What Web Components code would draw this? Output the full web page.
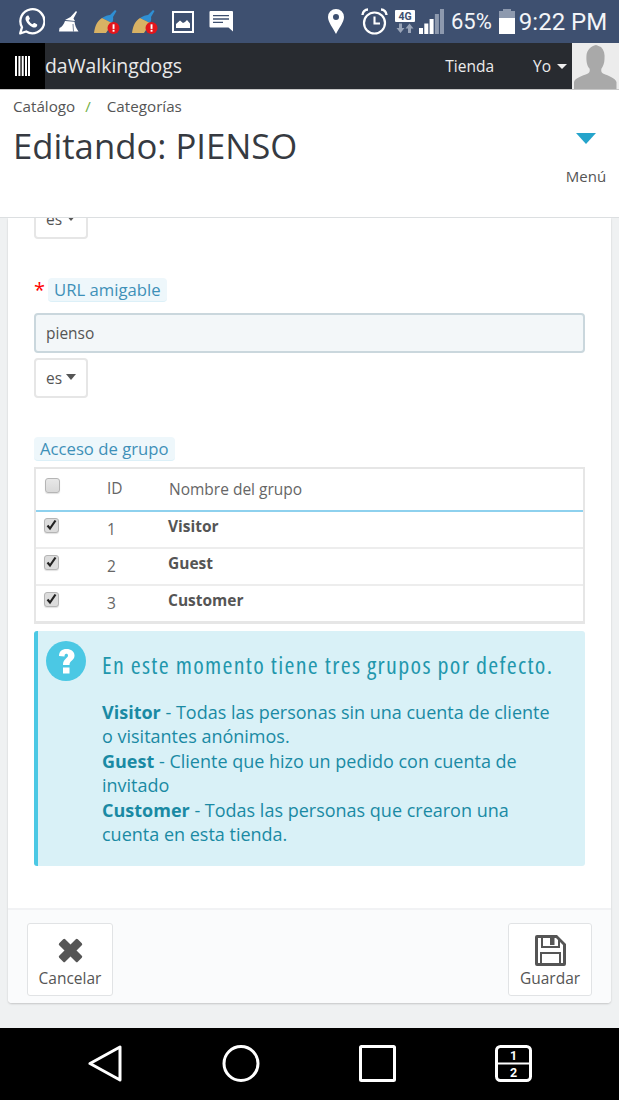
<!DOCTYPE html>
<html lang="es">
<head>
<meta charset="utf-8">
<title>Editando: PIENSO</title>
<style>
html, body { margin: 0; padding: 0; }
body { width: 619px; height: 1100px; overflow: hidden; display: flex; flex-direction: column; font-family: "Open Sans", "Liberation Sans", sans-serif; background: #eff1f2; }
</style>
</head>
<body>
<status-bar></status-bar>
<top-nav shop="daWalkingdogs"></top-nav>
<page-head title="Editando: PIENSO"></page-head>
<page-main>
  <lang-button clipped></lang-button>
  <form-label required style="margin-top:39px">URL amigable</form-label>
  <text-field value="pienso" style="margin-top:11px"></text-field>
  <lang-button style="margin-top:5px"></lang-button>
  <form-label style="margin-top:39px">Acceso de grupo</form-label>
  <group-table style="margin-top:6px"></group-table>
  <help-box style="margin-top:7px" heading="En este momento tiene tres grupos por defecto.">
    <b>Visitor</b> - Todas las personas sin una cuenta de cliente o visitantes anónimos.<br>
    <b>Guest</b> - Cliente que hizo un pedido con cuenta de invitado<br>
    <b>Customer</b> - Todas las personas que crearon una cuenta en esta tienda.
  </help-box>
  <form-footer slot="footer">
    <footer-button icon="close" style="width:86px">Cancelar</footer-button>
    <footer-button icon="save" style="width:84px">Guardar</footer-button>
  </form-footer>
</page-main>
<android-nav></android-nav>

<script>
class StatusBar extends HTMLElement {
    constructor() {
        super();
        const broom = `<svg width="26" height="24" viewBox="0 0 26 24">
          <path d="M8 8 C11 6 14 5 16 5 L21 0 L22.500 1 L19 7 C19.500 9 19 11 18 13 Z" fill="#2f8fd3"/>
          <path d="M8 8 L18 13 C17 16 14 20 12 23 L0 23 C1 16 3 11 8 8 Z" fill="#d8b264"/>
          <circle cx="19.500" cy="18" r="6" fill="#e3151b"/>
          <rect x="18.600" y="14.300" width="1.900" height="4.600" fill="#fff"/><rect x="18.600" y="19.800" width="1.900" height="1.900" fill="#fff"/>
        </svg>`;
        this.attachShadow({ mode: 'open' }).innerHTML = `
<style>
:host { display: flex; align-items: center; height: 43px; flex: none; background: #3e5070; color: #fff; font-family: Roboto, "Open Sans", sans-serif; }
svg { display: block; flex: none; }
.num { font-size: 22px; line-height: 1; color: #f3f5f8; }
.time { font-size: 24px; line-height: 1; color: #f3f5f8; white-space: nowrap; }
</style>
<svg style="margin-left:17px" width="28" height="28" viewBox="0 0 28 28" fill="none">
  <path d="M3.200 25.300 L5 19.200 A12 12 0 1 1 9.200 23.500 Z" stroke="#fff" stroke-width="2.300" stroke-linejoin="round"/>
  <path d="M10.200 7.800 C8.400 8.600 8 10.600 9 12.800 C10.200 15.600 12.600 18 15.600 19.200 C17.800 20 19.600 19.400 20.200 17.400 C20.400 16.800 20.300 16.500 19.900 16.300 L17.600 15.100 C17.200 14.900 16.900 15 16.600 15.300 L15.800 16.300 C14 15.600 12.400 14 11.700 12.200 L12.600 11.300 C12.900 11 12.900 10.700 12.800 10.300 L11.700 8 C11.400 7.500 10.800 7.500 10.200 7.800 Z" fill="#fff"/>
</svg>
<svg style="margin-left:14px" width="20" height="21" viewBox="0 0 20 21">
  <path d="M11.500 6 L17 0 L18 1 L14.500 7.500 L16 10 L6 9 Z" fill="#fff"/>
  <path d="M6 10 L15.500 10.800 C16 14 17 17.500 19.500 20.500 L0 20.500 L0.500 17 C3 16 5 13 6 10 Z" fill="#fff"/>
  <path d="M14 13 L14.500 20.500" stroke="#3e5070" stroke-width=".7"/>
</svg>
<span style="margin-left:15px;display:block">${broom}</span>
<span style="margin-left:12px;display:block">${broom}</span>
<svg style="margin-left:14px" width="22" height="22" viewBox="0 0 22 22">
  <rect x="1" y="1" width="20" height="20" fill="none" stroke="#fff" stroke-width="2"/>
  <path d="M4 17 L4 13 L8 9.500 L11 12 L13 11 L15 9 L18 12.500 L18 17 Z" fill="#fff"/>
</svg>
<svg style="margin-left:15px" width="24" height="21" viewBox="0 0 24 21">
  <path d="M0.500 1 Q0.500 0 1.500 0 L23 0 Q24 0 24 1 L24 20.500 L19.500 16.500 L1.500 16.500 Q0.500 16.500 0.500 15.500 Z" fill="#fff"/>
  <path d="M4 4.700 H20 M4 8 H20 M4 11.300 H14" stroke="#3e5070" stroke-width="1.300"/>
</svg>
<svg style="margin-left:95px" width="16" height="25" viewBox="0 0 16 25">
  <path fill-rule="evenodd" d="M8 0 A8 8 0 0 1 16 8 C16 13 11 19 8 25 C5 19 0 13 0 8 A8 8 0 0 1 8 0 Z M8 5 A3 3 0 1 0 8 11 A3 3 0 1 0 8 5 Z" fill="#fff"/>
</svg>
<svg style="margin-left:17px" width="27" height="27" viewBox="0 0 27 27" fill="none" stroke="#fff">
  <circle cx="13.500" cy="15" r="10.500" stroke-width="2.200"/>
  <path d="M13.500 8.500 V15.500 H19" stroke-width="2.100"/>
  <path d="M1.500 7 A5.500 5.500 0 0 1 7 1.500 M20 1.500 A5.500 5.500 0 0 1 25.500 7" stroke-width="2.400"/>
</svg>
<svg style="margin-left:7px" width="20" height="23" viewBox="0 0 20 23">
  <rect x="0" y="0" width="20" height="12" rx="1" fill="#fff"/>
  <text x="10" y="10" text-anchor="middle" font-family="Roboto, sans-serif" font-size="10.500" font-weight="700" fill="#3e5070">4G</text>
  <path d="M4 13.500 V18 H1.500 L5.500 23 L9.500 18 H7 V13.500 Z" fill="#9aa5b8"/>
  <path d="M13 23 V18.500 H10.500 L14.500 13.500 L18.500 18.500 H16 V23 Z" fill="#9aa5b8"/>
</svg>
<svg style="margin-left:4px" width="25" height="25" viewBox="0 0 25 25">
  <rect x="0" y="19" width="4" height="6" fill="#fff"/><rect x="5.300" y="14.500" width="4" height="10.500" fill="#fff"/>
  <rect x="10.600" y="10" width="4" height="15" fill="#fff"/><rect x="15.900" y="5" width="4" height="20" fill="#8d99ae"/>
  <rect x="21" y="0" width="4" height="25" fill="#8d99ae"/>
</svg>
<span class="num" style="margin-left:7px">65%</span>
<svg style="margin-left:7px" width="16" height="25" viewBox="0 0 16 25">
  <rect x="4" y="0" width="8" height="2.500" fill="#8d99ae"/><rect x="0" y="2" width="16" height="23" fill="#8d99ae"/>
  <rect x="0" y="9" width="16" height="16" fill="#fff"/>
</svg>
<span class="time" style="margin-left:4px">9:22 PM</span>`;
    }
}

class TopNav extends HTMLElement {
    constructor() {
        super();
        this.attachShadow({ mode: 'open' }).innerHTML = `
<style>
:host { display: flex; align-items: stretch; height: 46px; flex: none; background: #282b30; color: #e6e6e6; border-bottom: 1px solid #c8c8c8; font-family: "Open Sans", sans-serif; }
.logo { width: 45px; background: #000; display: flex; align-items: center; justify-content: center; }
.shop { font-size: 19.400px; line-height: 45px; flex: 1; color: #e9e9e9; }
.link { font-size: 15.500px; line-height: 46px; color: #ececec; }
.caret { width: 0; height: 0; border: 5px solid transparent; border-top-color: #eee; border-bottom: 0; align-self: center; margin-left: 6px; margin-right: 5px; }
.avatar { width: 47px; background: #ececec; }
svg { display: block; }
</style>
<div class="logo"><svg width="15" height="20" viewBox="0 0 15 20" fill="#fff"><rect x="0" y="0" width="2" height="20"/><rect x="3.400" y="0" width="2" height="20"/><rect x="6.700" y="0" width="2" height="20"/><rect x="10" y="0" width="2" height="20"/><rect x="13" y="0" width="2" height="20"/></svg></div>
<div class="shop">${this.getAttribute('shop')}</div>
<div class="link" style="margin-right:39px">Tienda</div>
<div class="link">Yo</div><div class="caret"></div>
<div class="avatar"><svg width="47" height="46" viewBox="0 0 47 46"><path d="M2 46 L2 39 C3 35 10 33 16 30.500 C18 29.500 18 27 17.500 25.500 C15 23 14 18 14.500 12 C15 7 19 3 24 2 C26 3 27 3 29 4 C32 7 33 11 32.500 16 C32.500 20 31 23.500 29.500 25.500 C29 27 29 29.500 31 30.500 C37 33 43 35 44.500 39 L44.500 46 Z" fill="#a9a9a9"/></svg></div>`;
    }
}

class PageHead extends HTMLElement {
    constructor() {
        super();
        this.attachShadow({ mode: 'open' }).innerHTML = `
<style>
:host { display: flex; justify-content: space-between; height: 128px; flex: none; box-sizing: border-box; background: #fff; border-bottom: 1px solid #dcdfe1; padding: 6px 14px 0 13px; font-family: "Open Sans", sans-serif; position: relative; z-index: 1; }
.crumbs { font-size: 15.200px; line-height: 20px; color: #555; display: flex; }
.sep { color: #6fae45; margin: 0 16px 0 10px; }
h1 { margin: 11px 0 0; font-size: 34.700px; line-height: 38px; font-weight: 400; color: #363a41; }
.menu { display: flex; flex-direction: column; align-items: center; font-size: 15px; color: #555; width: 38px; }
.arrow { width: 0; height: 0; border: 10.500px solid transparent; border-top: 11px solid #25a4cb; border-bottom: 0; margin-top: 37px; margin-left: -1px; }
.menu span { margin-top: 22px; line-height: 20px; white-space: nowrap; }
</style>
<div>
  <div class="crumbs"><span>Catálogo</span><span class="sep">/</span><span>Categorías</span></div>
  <h1>${this.getAttribute('title')}</h1>
</div>
<div class="menu"><div class="arrow"></div><span>Menú</span></div>`;
    }
}

class PageMain extends HTMLElement {
    constructor() {
        super();
        this.attachShadow({ mode: 'open' }).innerHTML = `
<style>
:host { display: block; flex: 1; min-height: 0; padding: 0 8px; overflow: hidden; color: #555; font-family: "Open Sans", sans-serif; }
.card { background: #fff; height: 785px; display: flex; flex-direction: column; box-shadow: 0 1px 2px rgba(0,0,0,.18); border-radius: 0 0 4px 4px; overflow: hidden; }
.body { flex: 1; padding: 0 26px 0 26px; display: flex; flex-direction: column; align-items: flex-start; }
</style>
<div class="card">
  <div class="body"><slot></slot></div>
  <slot name="footer"></slot>
</div>`;
    }
}

class LangButton extends HTMLElement {
    constructor() {
        super();
        this.attachShadow({ mode: 'open' }).innerHTML = `
<style>
:host { display: flex; align-items: center; justify-content: center; gap: 4px; box-sizing: border-box; width: 54px; height: 40px; background: #fff; border: 2px solid #e6e6e6; border-radius: 4px; font-size: 15.500px; color: #555; flex: none; }
:host([clipped]) { margin-top: -19px; }
i { width: 0; height: 0; border: 5.500px solid transparent; border-top: 6px solid #555; border-bottom: 0; margin-top: -3px; }
</style>
<span>es</span><i></i>`;
    }
}

class FormLabel extends HTMLElement {
    constructor() {
        super();
        this.attachShadow({ mode: 'open' }).innerHTML = `
<style>
:host { display: flex; align-items: flex-start; flex: none; }
.star { display: none; color: #f00; font-size: 20px; line-height: 24px; width: 14px; }
:host([required]) .star { display: block; }
.chip { display: block; height: 24px; box-sizing: border-box; padding: 0 6px; background: #eef7fb; border-bottom: 1px solid #dcf0f8; border-radius: 4px; color: #3e90b8; font-size: 16.700px; line-height: 24px; }
</style>
<span class="star">*</span><span class="chip"><slot></slot></span>`;
    }
}

class TextField extends HTMLElement {
    constructor() {
        super();
        this.attachShadow({ mode: 'open' }).innerHTML = `
<style>
:host { display: block; flex: none; align-self: stretch; box-sizing: border-box; height: 40px; padding: 0 10px; background: #f3f7f9; border: 2px solid #cad7dd; border-radius: 4px; font-size: 15.500px; line-height: 36px; color: #555; }
</style>${this.getAttribute('value')}`;
    }
}

class GroupTable extends HTMLElement {
    constructor() {
        super();
        const rows = [[1, 'Visitor'], [2, 'Guest'], [3, 'Customer']];
        this.attachShadow({ mode: 'open' }).innerHTML = `
<style>
:host { display: block; flex: none; align-self: stretch; border: 2px solid #e6e6e6; border-bottom-width: 3px; font-size: 15.500px; color: #666; }
.row { display: flex; height: 37px; box-sizing: border-box; border-bottom: 2px solid #ededed; position: relative; }
.row:last-child { border-bottom: 0; height: 35px; }
.row.head { height: 43px; border-bottom: 2px solid #8ed1ee; }
.check { width: 15px; height: 15px; box-sizing: border-box; margin: 6px 0 0 8px; background: #dcdcdc; border: 1px solid #b5b5b5; border-radius: 3px; box-shadow: 0 1px 1px rgba(0,0,0,.12); flex: none; }
.head .check { margin: 9px 0 0 9px; background: linear-gradient(#e8e8e8, #d9d9d9); }
svg { display: block; }
.id { width: 62px; margin-left: 48px; padding-top: 7px; line-height: 20px; }
.head .id { padding-top: 9px; margin-left: 47px; width: 62px; }
.name { font-weight: 700; color: #555; padding-top: 4px; line-height: 20px; margin-left: -1px; }
.head .name { font-weight: 400; padding-top: 10px; color: #666; margin-left: 0; }
</style>
<div class="row head"><span class="check"></span><span class="id">ID</span><span class="name">Nombre del grupo</span></div>
${rows.map(r => `<div class="row"><span class="check"><svg width="13" height="13" viewBox="0 0 13 13"><path d="M2.500 6.500 L5 9.500 L10.500 1.500" fill="none" stroke="#222" stroke-width="2.200"/></svg></span><span class="id">${r[0]}</span><span class="name">${r[1]}</span></div>`).join('')}`;
    }
}

class HelpBox extends HTMLElement {
    constructor() {
        super();
        this.attachShadow({ mode: 'open' }).innerHTML = `
<style>
:host { display: flex; flex: none; align-self: stretch; box-sizing: border-box; height: 235px; background: #d9f1f7; border-left: 4px solid #4bc8e4; border-radius: 3px; color: #1a8aa4; }
svg { display: block; margin: 10px 0 0 8px; flex: none; }
.text { margin-left: 16px; padding-top: 16px; width: 462px; }
h4 { margin: 0 0 17px; font-family: "Open Sans", sans-serif; font-stretch: 75%; font-size: 24px; letter-spacing: 1.300px; line-height: 36px; font-weight: 400; color: #1f97ad; white-space: nowrap; }
p { margin: 0; font-size: 18px; line-height: 24.400px; }
</style>
<svg width="40" height="40" viewBox="0 0 40 40"><circle cx="20" cy="20" r="20" fill="#4bc8e4"/><path d="M13 15 C13 10.500 16 8 20.500 8 C25 8 28.500 10.500 28.500 14.500 C28.500 19.500 23.500 19.500 23.500 24 L17 24 C17 17.500 22 17.500 22 14.500 C22 13.300 21.300 12.800 20.300 12.800 C19 12.800 18.500 14 18.500 15.500 Z" fill="#fff"/><rect x="17" y="26.500" width="6.500" height="6" fill="#fff"/></svg>
<div class="text"><h4>${this.getAttribute('heading')}</h4><p><slot></slot></p></div>`;
    }
}

class FormFooter extends HTMLElement {
    constructor() {
        super();
        this.attachShadow({ mode: 'open' }).innerHTML = `
<style>
:host { display: flex; justify-content: space-between; flex: none; box-sizing: border-box; height: 95px; padding: 13px 19px 0; background: #fafbfc; border-top: 2px solid #f1f2f4; }
</style><slot></slot>`;
    }
}

class FooterButton extends HTMLElement {
    constructor() {
        super();
        const icons = {
            close: `<svg width="25" height="25" viewBox="0 0 25 25"><path d="M7.200 1.200 L12.500 6.500 L17.800 1.200 Q18.800 .2 19.800 1.200 L23.800 5.200 Q24.800 6.200 23.800 7.200 L18.500 12.500 L23.800 17.800 Q24.800 18.800 23.800 19.800 L19.800 23.800 Q18.800 24.800 17.800 23.800 L12.500 18.500 L7.200 23.800 Q6.200 24.800 5.200 23.800 L1.200 19.800 Q.2 18.800 1.200 17.800 L6.500 12.500 L1.200 7.200 Q.2 6.200 1.200 5.200 L5.200 1.200 Q6.200 .2 7.200 1.200 Z" fill="#555"/></svg>`,
            save: `<svg width="31" height="31" viewBox="0 0 31 31"><path fill-rule="evenodd" d="M2 0 H22 L31 9 V29 Q31 31 29 31 H2 Q0 31 0 29 V2 Q0 0 2 0 Z M3 3 V28 H5 V17 H26 V28 H28 V10 L25 7 V13 H6 V3 Z M8 3 V11 H23 V5 L21 3 H19.500 V10 H15 V3 Z M7 19 V28 H24 V19 Z" fill="#555"/></svg>`
        };
        this.attachShadow({ mode: 'open' }).innerHTML = `
<style>
:host { display: flex; flex-direction: column; align-items: center; flex: none; box-sizing: border-box; height: 73px; background: #fff; border: 1px solid #e1e3e5; border-radius: 3px; font-size: 15.500px; color: #555; }
.ico { height: 45px; display: flex; align-items: center; justify-content: center; padding-top: 8px; box-sizing: border-box; }
.lbl { line-height: 20px; margin-top: -1px; }
</style>
<div class="ico">${icons[this.getAttribute('icon')]}</div><div class="lbl"><slot></slot></div>`;
    }
}

class AndroidNav extends HTMLElement {
    constructor() {
        super();
        this.attachShadow({ mode: 'open' }).innerHTML = `
<style>
:host { display: flex; align-items: center; flex: none; height: 72px; background: #000; box-sizing: border-box; padding-left: 88px; }
svg { display: block; flex: none; }
text { font-family: Roboto, sans-serif; font-weight: 700; font-size: 12.500px; fill: #fff; }
</style>
<svg width="34" height="38" viewBox="0 0 34 38" fill="none" stroke="#fff" stroke-width="3" stroke-linejoin="round"><path d="M32 2 V35 L2 18.500 Z"/></svg>
<svg style="margin-left:100px" width="38" height="38" viewBox="0 0 38 38" fill="none" stroke="#fff" stroke-width="3"><circle cx="19" cy="18.500" r="17"/></svg>
<svg style="margin-left:99px" width="38" height="38" viewBox="0 0 38 38" fill="none" stroke="#fff" stroke-width="3"><rect x="1.500" y="1.500" width="34" height="34" rx="1"/></svg>
<svg style="margin-left:98px" width="38" height="38" viewBox="0 0 38 38" fill="none"><rect x="1.500" y="1.500" width="34" height="34" rx="4" stroke="#fff" stroke-width="3"/><path d="M2 18.500 H35" stroke="#fff" stroke-width="2"/><text x="18.500" y="14.500" text-anchor="middle">1</text><text x="18.500" y="32" text-anchor="middle">2</text></svg>`;
    }
}

customElements.define('status-bar', StatusBar);
customElements.define('top-nav', TopNav);
customElements.define('page-head', PageHead);
customElements.define('page-main', PageMain);
customElements.define('lang-button', LangButton);
customElements.define('form-label', FormLabel);
customElements.define('text-field', TextField);
customElements.define('group-table', GroupTable);
customElements.define('help-box', HelpBox);
customElements.define('form-footer', FormFooter);
customElements.define('footer-button', FooterButton);
customElements.define('android-nav', AndroidNav);
</script>
</body>
</html>
